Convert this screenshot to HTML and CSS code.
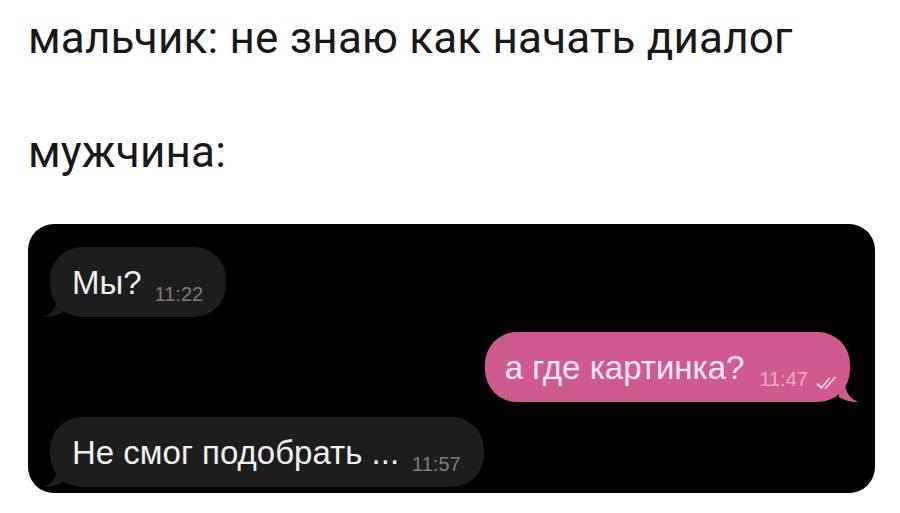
FILE: index.html
```html
<!DOCTYPE html>
<html lang="ru">
<head>
<meta charset="utf-8">
<link rel="stylesheet" href="styles.css">
</head>
<body>
<div class="page">
  <p class="caption line1">мальчик: не знаю как начать диалог</p>
  <p class="caption line2">мужчина:</p>
  <div class="chat">
    <div class="row left">
      <div class="bubble in">
        <span class="text">Мы?</span><span class="time">11:22</span>
        <svg class="tail tail-l" viewBox="0 0 20 20" width="20" height="20"><path d="M14 0 C14 9 10 16 1 20 C9 20 15 18 20 15 L20 0 Z"/></svg>
      </div>
    </div>
    <div class="row right">
      <div class="bubble out">
        <span class="text">а где картинка?</span><span class="time">11:47</span>
        <svg class="ticks" viewBox="0 0 22 14" width="22" height="14"><path d="M1.5 8 L5.5 12 L13 2.5 M9.5 12 L19 1.5"/></svg>
        <svg class="tail tail-r" viewBox="0 0 20 20" width="20" height="20"><path d="M6 0 C6 9 10 16 19 20 C11 20 5 18 0 15 L0 0 Z"/></svg>
      </div>
    </div>
    <div class="row left">
      <div class="bubble in">
        <span class="text">Не смог подобрать ...</span><span class="time">11:57</span>
        <svg class="tail tail-l" viewBox="0 0 20 20" width="20" height="20"><path d="M14 0 C14 9 10 16 1 20 C9 20 15 18 20 15 L20 0 Z"/></svg>
      </div>
    </div>
  </div>
</div>
</body>
</html>
```
FILE: styles.css
```css
html, body {
  margin: 0;
  padding: 0;
  background: #ffffff;
}
.page {
  width: 900px;
  height: 513px;
  overflow: hidden;
  padding: 0 0 0 28px;
  box-sizing: border-box;
}
.caption {
  margin: 0;
  font-family: Roboto, "Noto Sans", sans-serif;
  font-size: 44px;
  letter-spacing: 0.2px;
  color: #181818;
  line-height: 48px;
}
.line1 {
  padding-top: 14px;
}
.line2 {
  margin-top: 66px;
}
.chat {
  margin-top: 48px;
  width: 847px;
  height: 269px;
  background: #000;
  border-radius: 26px;
  box-sizing: border-box;
  padding: 23px 25px 0 22px;
  display: flex;
  flex-direction: column;
  gap: 15px;
}
.row {
  display: flex;
}
.row.right {
  justify-content: flex-end;
}
.bubble {
  position: relative;
  height: 70px;
  border-radius: 32px;
  box-sizing: border-box;
  display: flex;
  align-items: baseline;
  padding: 19px 23px 0 22px;
  font-family: "Liberation Sans", Arial, sans-serif;
}
.bubble.in {
  background: #1d1d1d;
}
.bubble.out {
  background: #cf5a8f;
  padding-left: 20px;
  padding-right: 12px;
}
.text {
  font-size: 33px;
  line-height: 34px;
  color: #efefef;
}
.out .text {
  color: #fbe9f1;
}
.time {
  font-size: 20px;
  margin-left: 13px;
  position: relative;
  top: 7px;
  color: #7c7c7c;
}
.out .time {
  margin-left: 15px;
  color: #f1a9c9;
}
.ticks {
  position: relative;
  top: 6px;
  margin-left: 8px;
  fill: none;
  stroke: #f8d2e3;
  stroke-width: 1.8;
  stroke-linecap: round;
  stroke-linejoin: round;
  align-self: center;
}
.tail {
  position: absolute;
  bottom: 0;
}
.tail-l {
  left: -7px;
  fill: #1d1d1d;
}
.tail-r {
  right: -9px;
  fill: #cf5a8f;
}
```
